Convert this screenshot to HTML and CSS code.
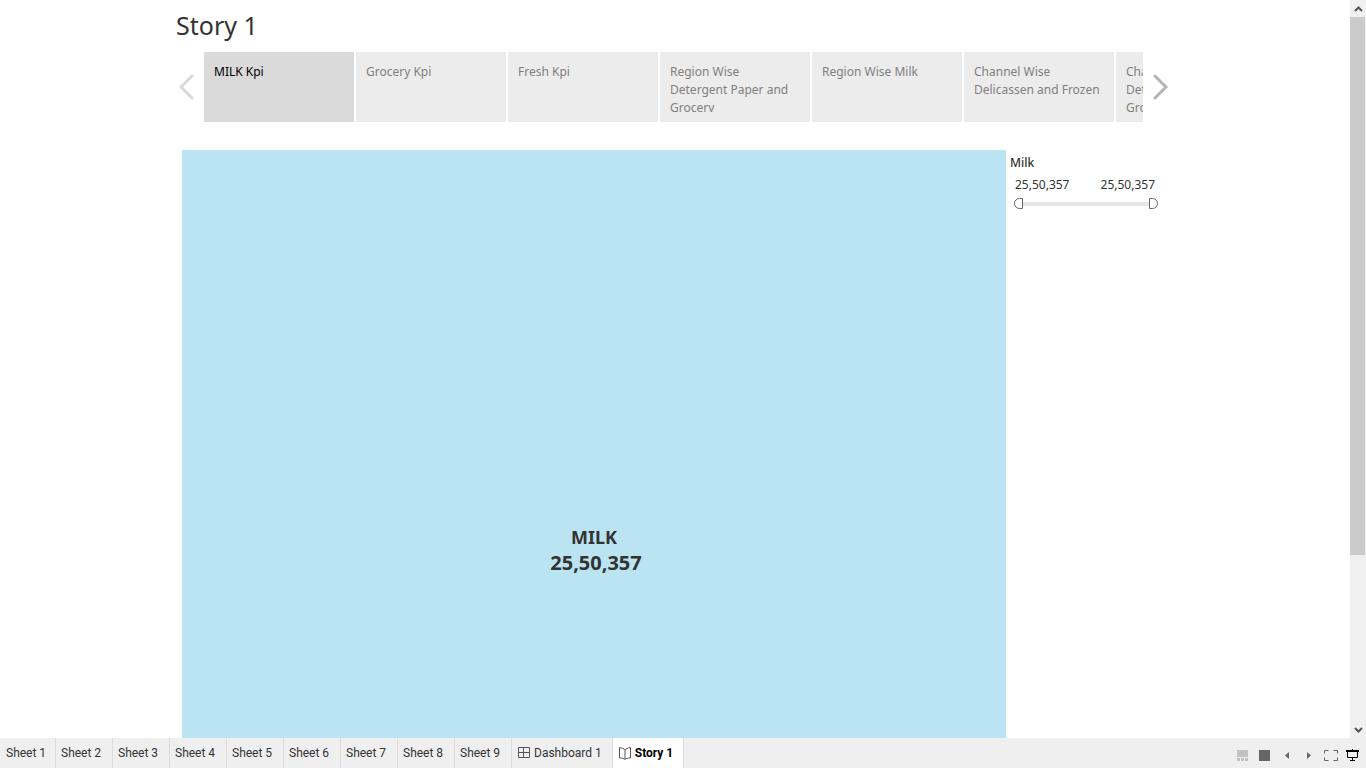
FILE: index.html
```html
<!DOCTYPE html>
<html lang="en">
<head>
<meta charset="utf-8">
<title>Story 1</title>
<link rel="stylesheet" href="styles.css">
</head>
<body>
<div class="workspace">
  <main class="viewport">
    <div class="story">
      <h1 class="story-title">Story 1</h1>
      <nav class="navigator" aria-label="Story points">
        <button class="arrow arrow-prev" aria-label="Previous" disabled><svg width="16" height="26" viewBox="0 0 16 26"><path d="M13 2 2 13l11 11"/></svg></button>
        <div class="points">
          <button class="point point-active"><span class="caption">MILK Kpi</span></button>
          <button class="point"><span class="caption">Grocery Kpi</span></button>
          <button class="point"><span class="caption">Fresh Kpi</span></button>
          <button class="point"><span class="caption">Region Wise Detergent Paper and Grocery</span></button>
          <button class="point"><span class="caption">Region Wise Milk</span></button>
          <button class="point"><span class="caption">Channel Wise Delicassen and Frozen</span></button>
          <button class="point"><span class="caption">Channel Wise Detergent Paper and Grocery</span></button>
        </div>
        <button class="arrow" aria-label="Next"><svg width="16" height="26" viewBox="0 0 16 26"><path d="m3 2 11 11L3 24"/></svg></button>
      </nav>
      <div class="sheet">
        <section class="mark"><div>MILK</div><div class="mark-value">25,50,357</div></section>
        <aside class="filter">
          <h2 class="filter-title">Milk</h2>
          <div class="filter-values"><label for="low">25,50,357</label><label for="high">25,50,357</label></div>
          <div class="slider">
            <input class="range range-low" id="low" type="range" min="0" max="100" value="0">
            <input class="range range-high" id="high" type="range" min="0" max="100" value="100">
          </div>
        </aside>
      </div>
    </div>
  </main>
  <div class="scrollbar">
    <button class="scroll-button" aria-label="Scroll up"><svg width="9" height="6" viewBox="0 0 9 6"><path d="m1 5 3.500-3.500L8 5"/></svg></button>
    <div class="scroll-track"><div class="scroll-thumb"></div></div>
    <button class="scroll-button" aria-label="Scroll down"><svg width="9" height="6" viewBox="0 0 9 6"><path d="m1 1 3.500 3.500L8 1"/></svg></button>
  </div>
</div>
<footer class="bottom">
  <nav class="tabs" aria-label="Sheets">
    <button class="tab tab-first">Sheet 1</button>
    <button class="tab">Sheet 2</button>
    <button class="tab">Sheet 3</button>
    <button class="tab">Sheet 4</button>
    <button class="tab">Sheet 5</button>
    <button class="tab">Sheet 6</button>
    <button class="tab">Sheet 7</button>
    <button class="tab">Sheet 8</button>
    <button class="tab">Sheet 9</button>
    <button class="tab tab-icon"><svg width="12" height="12" viewBox="0 0 12 12"><path d="M.5.5h11v10H.5zM5.500.5v10M.5 5.500h11"/></svg>Dashboard 1</button>
    <button class="tab tab-icon tab-active"><svg width="12" height="13" viewBox="0 0 12 13"><path d="M6 3C5.300 1.700 3 1 .5.6v10.300c2.500.2 4.500.6 5.500 1.500 1-.9 3-1.300 5.500-1.500V.6C9 1 6.700 1.700 6 3zM6 3v9"/></svg>Story 1</button>
  </nav>
  <div class="tools">
    <button class="tool" aria-label="Filmstrip"><svg width="14" height="14" viewBox="0 0 14 14" fill="#c2c2c2"><path d="M1 2h11v7H1zM1 10h3v3H1zM5 10h3v3H5zM9 10h3v3H9z"/></svg></button>
    <button class="tool" aria-label="Sheet sorter"><svg width="14" height="14" viewBox="0 0 14 14" fill="#666"><path d="M1 2h11v11H1z"/></svg></button>
    <button class="tool" aria-label="Previous sheet"><svg width="14" height="14" viewBox="0 0 14 14" fill="#666"><path d="M9 4v7L5 7.500z"/></svg></button>
    <button class="tool" aria-label="Next sheet"><svg width="14" height="14" viewBox="0 0 14 14" fill="#666"><path d="M5 4v7l4-3.500z"/></svg></button>
    <button class="tool" aria-label="Full screen"><svg width="14" height="14" viewBox="0 0 14 14" fill="none" stroke="#666"><path d="M.5 5.500v-3h4M9.500 2.500h4v3M.5 9.500v3h4M13.500 9.500v3h-4"/></svg></button>
    <button class="tool" aria-label="Presentation mode"><svg width="14" height="14" viewBox="0 0 14 14" fill="none" stroke="#000"><path stroke-width="2" d="M0 3h13"/><path d="M1.500 4v5.500h10V4M6.500 1v2M6.500 10v2.500M4 12.500h5"/></svg></button>
  </div>
</footer>
</body>
</html>
```

FILE: styles.css
```css
* { box-sizing: border-box; }
body {
  margin: 0;
  height: 100vh;
  display: flex;
  flex-direction: column;
  overflow: hidden;
  background: #fff;
  color: #333;
  font: 12px/18px "Noto Sans", sans-serif;
}
button {
  margin: 0;
  padding: 0;
  border: 0;
  background: none;
  color: inherit;
  font: inherit;
}
svg { display: block; flex: none; }
.workspace {
  flex: 1;
  min-height: 0;
  display: flex;
}
.viewport {
  flex: 1;
  min-width: 0;
  overflow: hidden;
}
.story {
  max-width: 1014px;
  margin: 0 auto;
  padding-top: 7px;
}
.story-title {
  margin: 0 0 9px 8px;
  font-size: 25px;
  line-height: 36px;
  font-weight: 400;
}
.navigator {
  display: flex;
  align-items: center;
  padding: 0 14px 0 11px;
}
.arrow svg {
  fill: none;
  stroke: #b4b4b4;
  stroke-width: 3;
  stroke-linecap: round;
}
.arrow-prev svg { stroke: #d9d9d9; }
.points {
  flex: 1;
  min-width: 0;
  display: flex;
  gap: 2px;
  margin: 0 9px;
  overflow: hidden;
}
.point {
  flex: none;
  width: 150px;
  height: 70px;
  display: flex;
  align-items: flex-start;
  padding: 11px 12px 0 10px;
  background: #ececec;
  color: #808080;
  text-align: left;
}
.point-active { background: #dadada; color: #000; }
.caption { max-height: 49px; overflow: hidden; }
.sheet {
  display: flex;
  gap: 4px;
  margin-top: 28px;
  padding: 0 22px 0 14px;
}
.mark {
  flex: 1;
  height: 800px;
  display: flex;
  flex-direction: column;
  align-items: center;
  justify-content: center;
  background: #bae4f2;
  font-size: 18px;
  line-height: 25px;
  font-weight: 700;
}
.mark-value { padding-left: 4px; font-size: 20px; }
.filter { width: 150px; }
.filter-title {
  margin: 4px 0;
  font-size: 12px;
  line-height: 18px;
  font-weight: 500;
}
.filter-values {
  display: flex;
  justify-content: space-between;
  padding: 0 5px;
}
.slider {
  display: grid;
  align-items: center;
  margin: 4px 2px 0 4px;
  height: 11px;
  background: linear-gradient(#e6e6e6, #e6e6e6) center / 130px 4px no-repeat;
}
.range {
  grid-area: 1 / 1;
  width: 100%;
  height: 11px;
  margin: 0;
  appearance: none;
  background: none;
  pointer-events: none;
}
.range::-webkit-slider-thumb {
  appearance: none;
  width: 9px;
  height: 11px;
  border: 1px solid #666;
  background: #fff;
  pointer-events: auto;
}
.range-low::-webkit-slider-thumb { border-radius: 6px 0 0 6px; }
.range-high::-webkit-slider-thumb { border-radius: 0 6px 6px 0; }
.scrollbar {
  width: 16px;
  display: flex;
  flex-direction: column;
  background: #f0f0f0;
}
.scroll-button {
  height: 17px;
  display: grid;
  place-items: center;
}
.scroll-button svg { fill: none; stroke: #555; stroke-width: 2; }
.scroll-track { flex: 1; padding-right: 1px; }
.scroll-thumb { height: 76.4%; background: #cbcbcb; }
.bottom {
  height: 30px;
  display: flex;
  justify-content: space-between;
  background: #efefef;
}
.tabs { display: flex; }
.tab {
  min-width: 57px;
  padding: 0 8px 0 5px;
  border-right: 1px solid #ddd;
  font-family: Roboto, sans-serif;
  text-align: left;
  white-space: nowrap;
}
.tab-first { min-width: 56px; padding-left: 6px; }
.tab-icon {
  display: flex;
  align-items: center;
  gap: 4px;
  padding: 0 10px 0 6px;
}
.tab-icon svg { fill: none; stroke: #555; }
.tab-active { background: #fff; color: #000; font-weight: 700; }
.tools {
  display: flex;
  align-items: center;
  gap: 8px;
  padding: 4px 6px 0 0;
}
```
